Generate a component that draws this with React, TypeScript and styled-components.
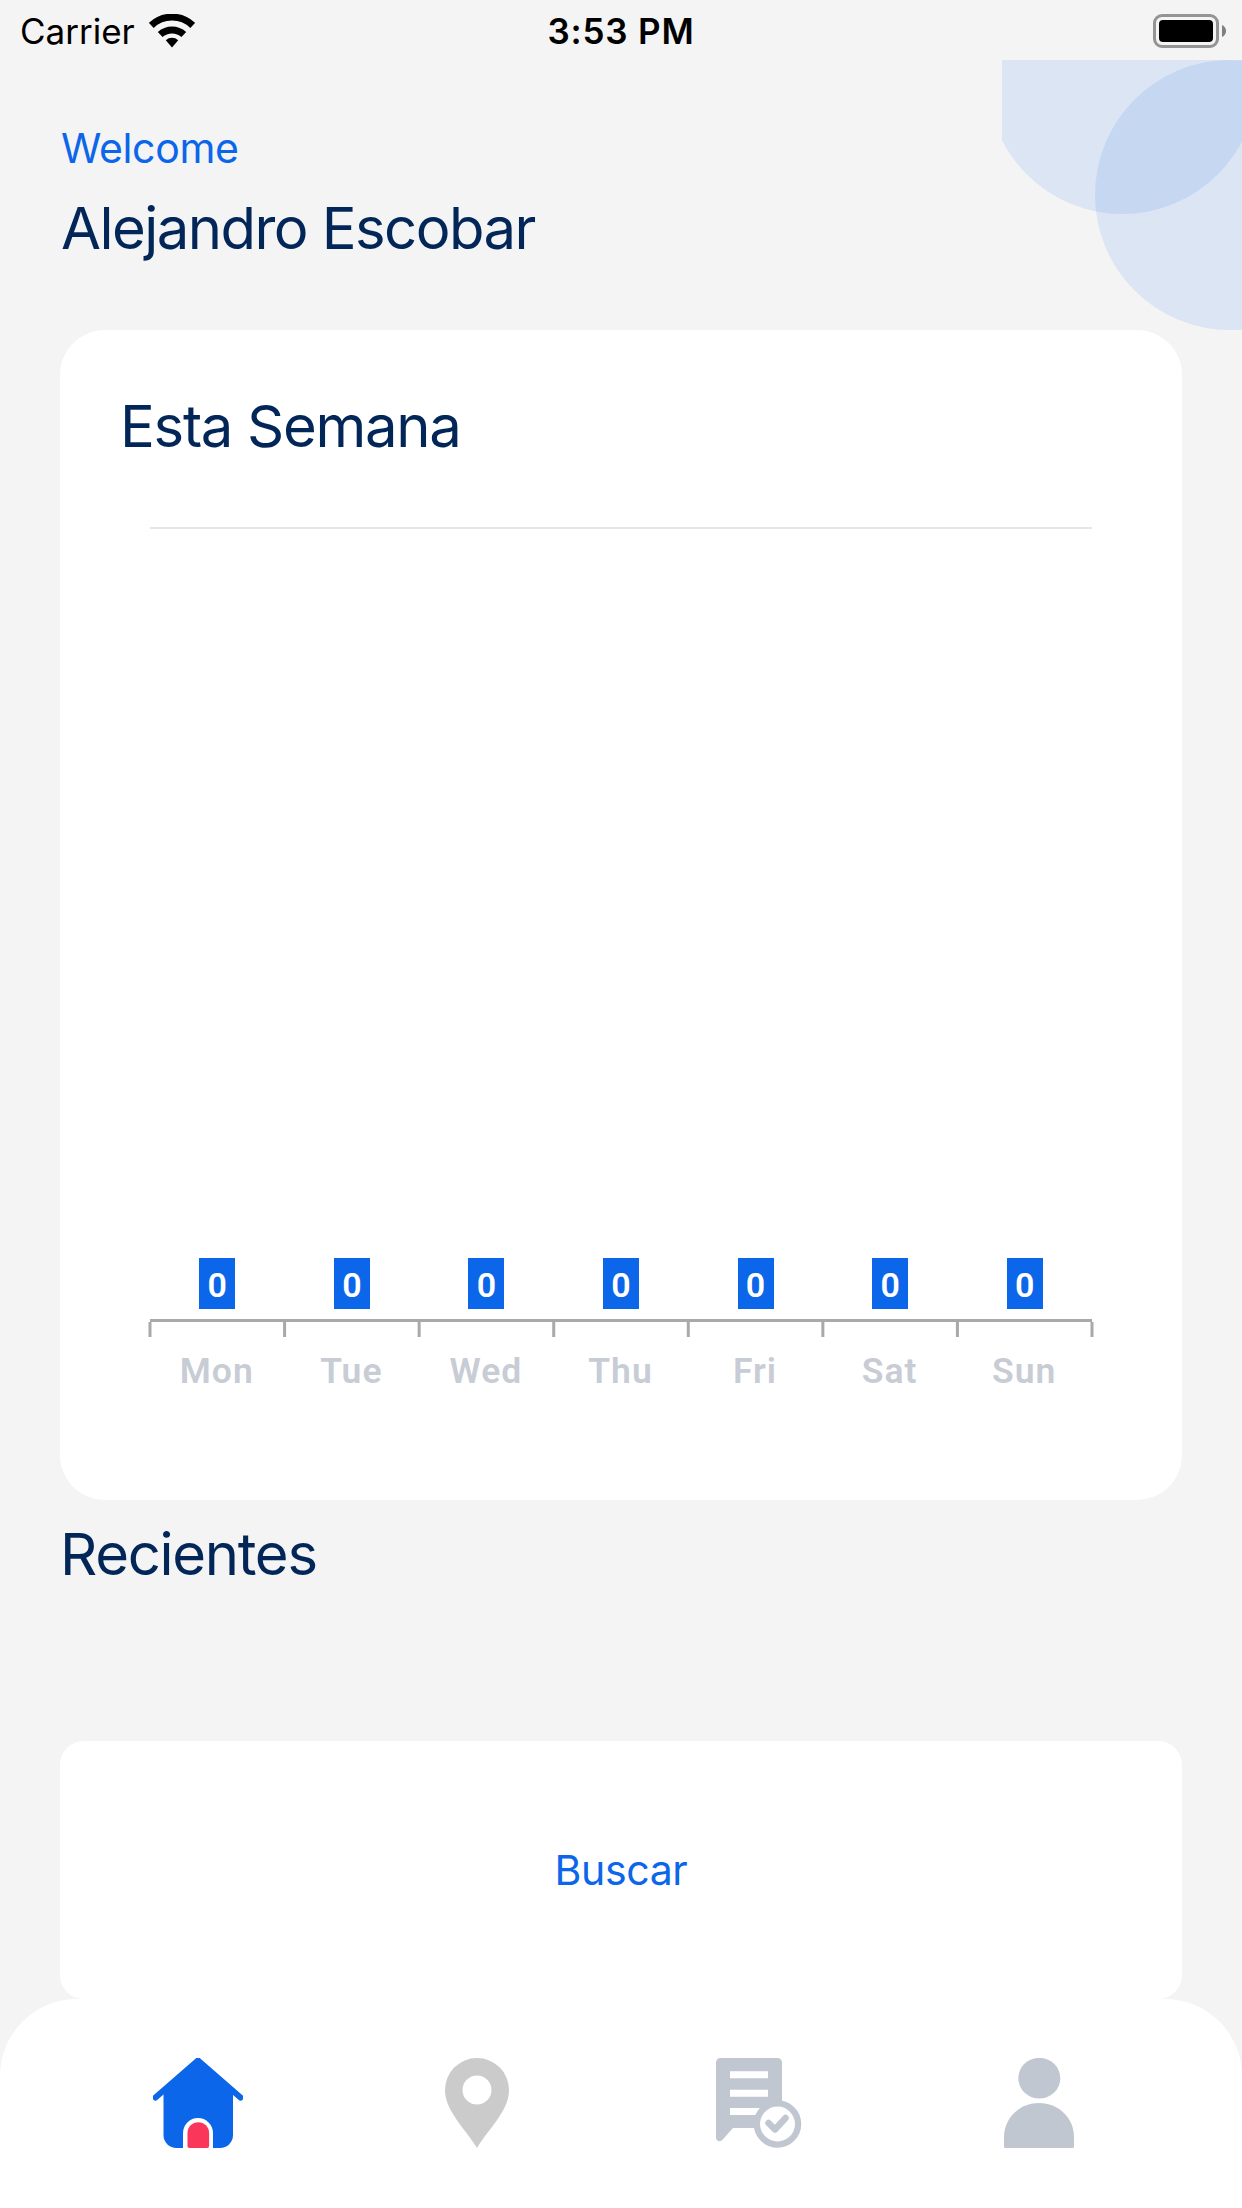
import React from "react";
import styled, { createGlobalStyle } from "styled-components";

const BLUE = "#0b66ea";
const NAVY = "#032658";
const SLATE = "#c0c7d1";
const DAYS = ["Mon", "Tue", "Wed", "Thu", "Fri", "Sat", "Sun"];

const GlobalStyle = createGlobalStyle`
  *, *::before, *::after { box-sizing: border-box; }
  body { margin: 0; background: #f4f4f4; }
`;

const Screen = styled.div`
  position: relative;
  display: flex;
  flex-direction: column;
  width: 1242px;
  height: 2208px;
  overflow: hidden;
  background: #f4f4f4;
  font-family: Inter, "Liberation Sans", sans-serif;
`;

const StatusBar = styled.header`
  display: grid;
  grid-template-columns: 1fr auto 1fr;
  align-items: center;
  height: 60px;
  padding: 0 16px 0 20px;
  color: #000;
`;

const StatusLeft = styled.div`
  display: flex;
  align-items: center;
  gap: 14px;
`;

const StatusText = styled.span`
  font-size: 35px;
  line-height: 62px;
`;

const Clock = styled(StatusText)`
  margin-right: 4px;
  font-weight: 570;
  letter-spacing: 0.8px;
`;

const BatteryIcon = styled.svg`
  justify-self: end;
`;

const Bubbles = styled.svg`
  position: absolute;
  top: 60px;
  right: 0;
`;

const Main = styled.main`
  flex: 1;
  display: flex;
  flex-direction: column;
  padding: 0 60px;
`;

const Greeting = styled.div`
  display: flex;
  flex-direction: column;
  gap: 19px;
  height: 270px;
  padding: 63px 0 0 1px;
`;

const LinkText = styled.div`
  font-size: 41px;
  line-height: 50px;
  letter-spacing: -0.35px;
  color: ${BLUE};
`;

const Title = styled.h1<{ $spacing?: number }>`
  margin: 0;
  font-size: 58px;
  font-weight: 410;
  line-height: 72px;
  letter-spacing: ${(p) => p.$spacing ?? -1.3}px;
  color: ${NAVY};
`;

const ChartCard = styled.section`
  display: flex;
  flex-direction: column;
  height: 1170px;
  padding: 60px 90px 0;
  border-radius: 45px;
  background: #fff;
`;

const CardHeading = styled.div`
  height: 137px;
  margin-left: -30px;
`;

const Plot = styled.div`
  display: flex;
  align-items: flex-end;
  height: 792px;
  padding-bottom: 10px;
  border-top: 2px solid #e6e6e6;
`;

const Week = styled.div`
  display: grid;
  grid-template-columns: repeat(7, 1fr);
  width: 100%;
  justify-items: center;
`;

const DayLabels = styled(Week)`
  margin-top: 13px;
`;

const Value = styled.span`
  width: 36px;
  height: 51px;
  background: ${BLUE};
  color: #fff;
  font: 600 34px/54px Roboto, sans-serif;
  text-align: center;
`;

const Axis = styled.svg`
  display: block;
  overflow: visible;
`;

const Day = styled.span`
  margin-right: 1px;
  font: 600 35.5px/42px Roboto, sans-serif;
  letter-spacing: 1px;
  color: #c7ccd5;
`;

const Recent = styled.section`
  height: 241px;
  padding-top: 18px;
`;

const SearchCard = styled.button`
  display: flex;
  align-items: center;
  justify-content: center;
  height: 258px;
  padding: 0;
  border: 0;
  border-radius: 24px;
  background: #fff;
  font-family: inherit;
`;

const TabBar = styled.nav`
  display: flex;
  height: 209px;
  padding: 59px 63px 0 58px;
  border-radius: 77px 77px 0 0;
  background: #fff;
`;

const Tab = styled.a`
  flex: 1;
  display: flex;
  justify-content: center;
  height: 90px;
`;

function Wifi() {
  return (
    <svg width="46" height="34" viewBox="0 0 46 34">
      <path d="M23 33.5l-6.200-7.300a9.400 9.400 0 0 1 12.400 0z" />
      <path d="M11.200 20.500a17.400 17.400 0 0 1 23.600 0" fill="none" stroke="#000" strokeWidth="7" />
      <path d="M2.300 11.400a30 30 0 0 1 41.400 0" fill="none" stroke="#000" strokeWidth="7" />
    </svg>
  );
}

function Battery() {
  return (
    <BatteryIcon width="73" height="34" viewBox="0 0 73 34">
      <rect x="1.5" y="1.5" width="63" height="31" rx="7.5" fill="none" stroke="#949494" strokeWidth="3" />
      <rect x="6" y="6" width="54" height="22" rx="4" />
      <path d="M69 11c2.600 1 4 3.400 4 6s-1.400 5-4 6z" fill="#808080" />
    </BatteryIcon>
  );
}

function HomeIcon() {
  return (
    <svg width="90" height="90" viewBox="0 0 90 90">
      <path d="M45 2.500 87.500 39.500M45 2.500 2.500 39.500" stroke={BLUE} strokeWidth="6" strokeLinecap="round" />
      <path d="M45 1 80 33v44a13 13 0 0 1-13 13H23.500a13 13 0 0 1-13-13V33z" fill={BLUE} />
      <path d="M30 90V75a15 15 0 0 1 30 0v15z" fill="#fff" />
      <path d="M36.500 90a2 2 0 0 1-2-2V75a10.800 10.800 0 0 1 21.600 0v13a2 2 0 0 1-2 2z" fill="#fa375a" />
    </svg>
  );
}

function PinIcon() {
  return (
    <svg width="66" height="90" viewBox="0 0 66 90">
      <path
        fillRule="evenodd"
        fill="#cbcbcb"
        d="M32 90C20 70 0 53 0 32a32 32 0 0 1 64 0C64 53 44 70 32 90zM32 17.500a14.500 14.500 0 1 0 0 29 14.500 14.500 0 1 0 0-29z"
      />
    </svg>
  );
}

function ReportIcon() {
  return (
    <svg width="86" height="90" viewBox="0 0 86 90">
      <path d="M4.500 0h57a4.500 4.500 0 0 1 4.500 4.500V70H17L6.500 81.800C4 84.500 0 83 0 79.500v-75A4.500 4.500 0 0 1 4.500 0z" fill={SLATE} />
      <path d="M14 13.300h38v7H14zM14 31.700h38v7H14zM14 50h30l-4.500 7H14z" fill="#fff" />
      <circle cx="61.500" cy="66" r="20.600" fill="#fff" stroke={SLATE} strokeWidth="6.300" />
      <path d="m52.500 65 6.500 6.500L69.500 60" fill="none" stroke={SLATE} strokeWidth="6.500" strokeLinecap="round" strokeLinejoin="round" />
    </svg>
  );
}

function PersonIcon() {
  return (
    <svg width="70" height="90" viewBox="0 0 70 90" fill={SLATE}>
      <ellipse cx="35.300" cy="20.200" rx="21" ry="20.300" />
      <path d="M1.500 90A1.500 1.500 0 0 1 0 88.500V79C0 59.500 16 45 35 45s35 14.500 35 34v9.500a1.500 1.500 0 0 1-1.500 1.500z" />
    </svg>
  );
}

function WeekAxis() {
  const step = 942 / DAYS.length;
  return (
    <Axis width="942" height="18" viewBox="0 0 942 18">
      <rect width="942" height="3" fill="#a9a9a9" />
      {Array.from({ length: DAYS.length + 1 }, (_, i) => (
        <rect key={i} x={i * step - 1.5} y="3" width="3" height="15" fill="#a9a9a9" />
      ))}
    </Axis>
  );
}

export default function App() {
  return (
    <Screen>
      <GlobalStyle />
      <Bubbles width="240" height="270" viewBox="0 0 240 270" fill={BLUE} fillOpacity="0.1">
        <circle cx="120.300" cy="19" r="135" />
        <circle cx="228" cy="135" r="135" />
      </Bubbles>
      <StatusBar>
        <StatusLeft>
          <StatusText>Carrier</StatusText>
          <Wifi />
        </StatusLeft>
        <Clock>3:53 PM</Clock>
        <Battery />
      </StatusBar>
      <Main>
        <Greeting>
          <LinkText>Welcome</LinkText>
          <Title $spacing={-1.55}>Alejandro Escobar</Title>
        </Greeting>
        <ChartCard>
          <CardHeading>
            <Title as="h2">Esta Semana</Title>
          </CardHeading>
          <Plot>
            <Week>
              {DAYS.map((day) => (
                <Value key={day}>0</Value>
              ))}
            </Week>
          </Plot>
          <WeekAxis />
          <DayLabels>
            {DAYS.map((day) => (
              <Day key={day}>{day}</Day>
            ))}
          </DayLabels>
        </ChartCard>
        <Recent>
          <Title as="h2">Recientes</Title>
        </Recent>
        <SearchCard>
          <LinkText as="span">Buscar</LinkText>
        </SearchCard>
      </Main>
      <TabBar>
        <Tab><HomeIcon /></Tab>
        <Tab><PinIcon /></Tab>
        <Tab><ReportIcon /></Tab>
        <Tab><PersonIcon /></Tab>
      </TabBar>
    </Screen>
  );
}
